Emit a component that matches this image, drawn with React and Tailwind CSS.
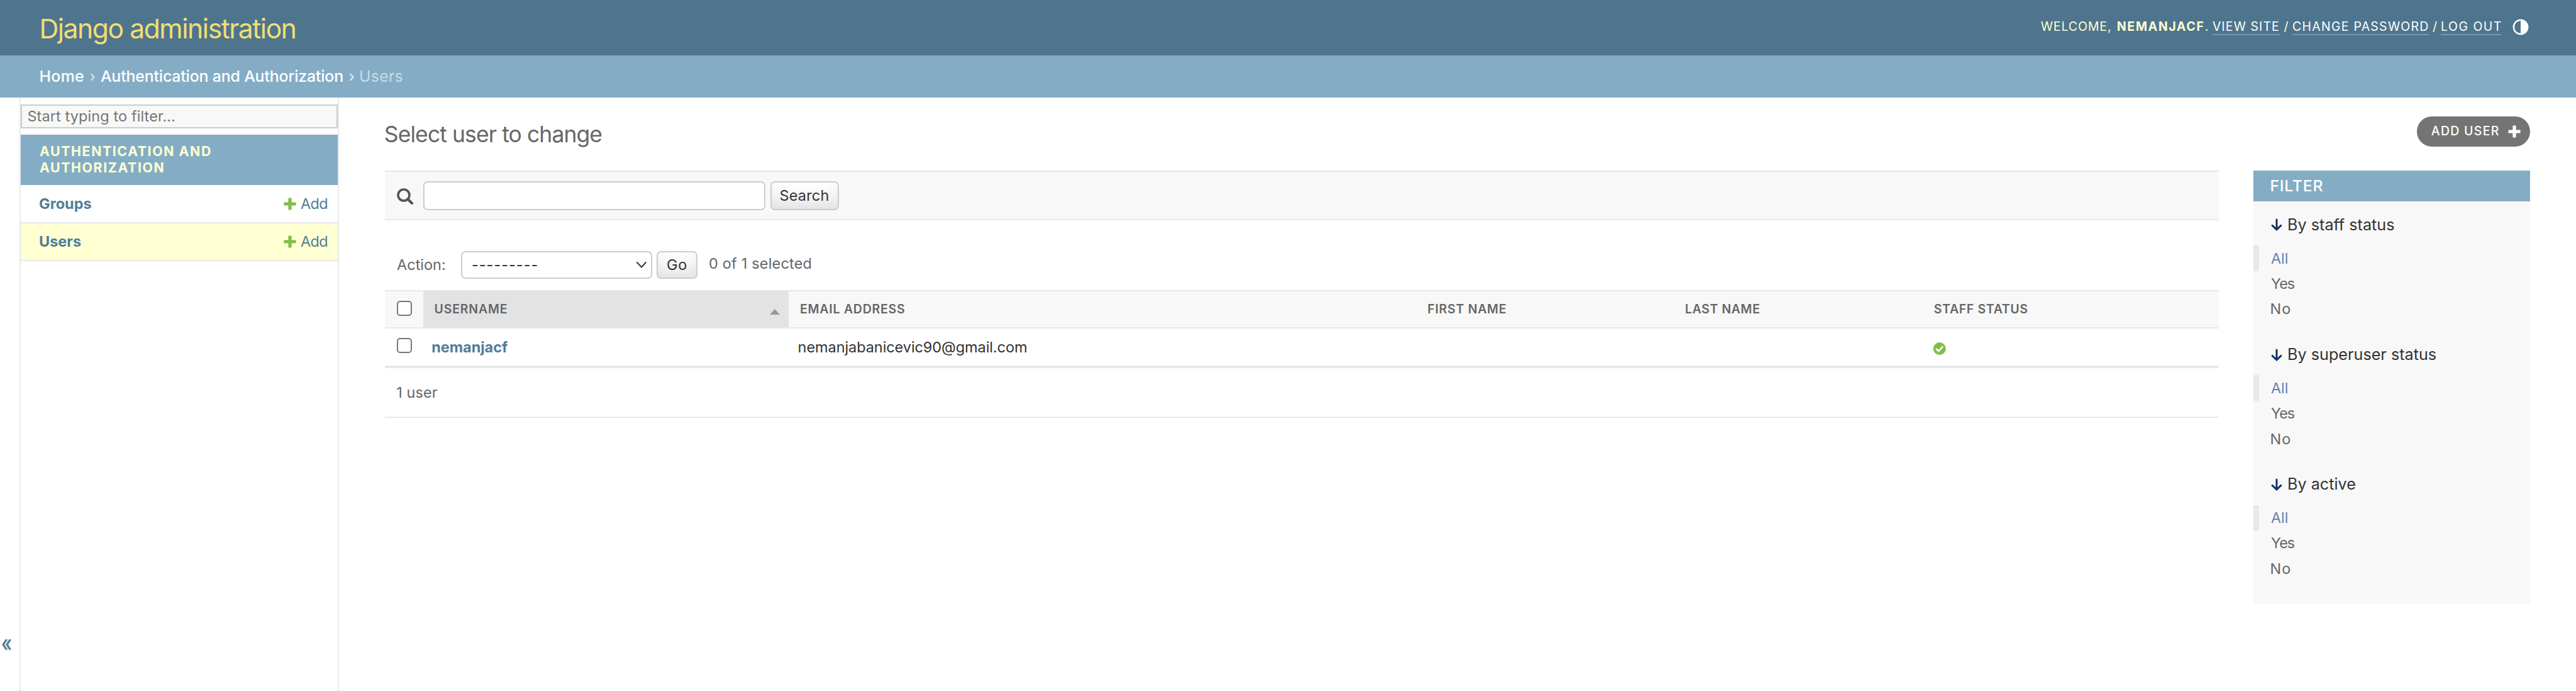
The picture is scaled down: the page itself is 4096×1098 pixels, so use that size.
function Plus({ className }) {
  return (
    <svg viewBox="0 0 20 20" className={className} fill="currentColor">
      <path d="M8.3 0.4h3.4a.9.9 0 0 1 .9.9v6.1h6.1a.9.9 0 0 1 .9.9v3.4a.9.9 0 0 1-.9.9h-6.1v6.1a.9.9 0 0 1-.9.9H8.3a.9.9 0 0 1-.9-.9v-6.1H1.3a.9.9 0 0 1-.9-.9V8.3a.9.9 0 0 1 .9-.9h6.1V1.3a.9.9 0 0 1 .9-.9z" />
    </svg>
  );
}

function Checkbox() {
  return (
    <div className="pl-[19px] pt-[15px]">
      <div className="h-[24px] w-[24px] rounded-[5px] border-2 border-[#767676] bg-white" />
    </div>
  );
}

function SideRow({ label, active }) {
  return (
    <div className={"flex items-center border-b-2 border-[#e8e8e8] pl-[29px] text-[23.5px] text-[#527d98] " + (active ? "h-[60px] bg-[#ffffd2]" : "h-[61px]")}>
      <span className="font-bold">{label}</span>
      <Plus className="ml-auto h-5 w-5 text-[#83bd47]" />
      <span className="ml-[7.5px] mr-[16px] tracking-[-0.7px]">Add</span>
    </div>
  );
}

function FilterGroup({ title }) {
  return (
    <div className="h-[206.2px] text-[23.5px] text-[#666]">
      <div className="flex h-[70.3px] items-center pl-[28px] pt-[4.5px] text-[25.2px] text-[#333]">
        <svg viewBox="0 0 18 20" className="mr-[8px] h-5 w-[18px]" fill="none" stroke="#123262" strokeWidth="3" strokeLinecap="round" strokeLinejoin="round">
          <path d="M9 2v15.5M2.2 11.4 9 18l6.8-6.6" />
        </svg>
        <span>{title}</span>
      </div>
      <div className="flex h-[40.3px] items-center border-l-[9px] border-[#e8e8e8] pl-[19px] text-[#6780ae]">
        <span className="tracking-[-0.1px]">All</span>
      </div>
      <div className="flex h-[40.3px] items-center pl-[28px]"><span className="tracking-[-1px]">Yes</span></div>
      <div className="flex h-[40.3px] items-center pl-[26.5px]"><span className="tracking-[1px]">No</span></div>
    </div>
  );
}

const cols = "grid grid-cols-[61px_581px_999px_409px_395px_471px]";
const button = "flex items-center justify-center rounded-[7px] border-2 border-[#ccc] bg-white text-[#333] shadow-[inset_0_-27px_37px_-18px_rgba(0,0,0,0.15)]";
const userLink = "h-[26px] border-b-2 border-white/25 whitespace-nowrap text-white";

export default function App() {
  return (
    <div className="flex h-[1098px] w-[4096px] flex-col overflow-hidden bg-white font-['Inter',sans-serif] text-[#333]">
      <header className="flex h-[88px] shrink-0 bg-[#4e758d] pl-[62.4px] pr-[75px]">
        <h1 className="pt-[1.5px] text-[42.7px] leading-[88px] tracking-[-1.48px] text-[#f1de72]">Django administration</h1>
        <div className="ml-auto flex pt-[30px] text-[19.5px] leading-[24px] text-[#ffffd2]">
          <span className="w-[121px] tracking-[0.89px]">WELCOME,</span>
          <span className="w-[140px] font-bold tracking-[1.63px]">NEMANJACF</span>
          <span className="w-[12px]">.</span>
          <a className={userLink + " w-[107px] tracking-[1.08px]"}>VIEW SITE</a>
          <span className="w-[20px] text-center">/</span>
          <a className={userLink + " w-[217px] tracking-[1.25px]"}>CHANGE PASSWORD</a>
          <span className="w-[19px] text-center">/</span>
          <a className={userLink + " w-[96px] tracking-[1.5px]"}>LOG OUT</a>
          <svg viewBox="0 0 26 26" className="ml-[18px] h-[26px] w-[26px]">
            <circle cx="13" cy="13" r="11.2" fill="none" stroke="#fff" strokeWidth="2.4" />
            <path d="M13 1a12 12 0 0 1 0 24z" fill="#fff" />
          </svg>
        </div>
      </header>
      <nav className="flex h-[67px] shrink-0 items-center whitespace-nowrap bg-[#84adc5] pl-[62.5px] text-[24.9px] text-white">
        <a className="w-[80px] font-medium tracking-[0.3px]">Home</a>
        <span className="w-[17.4px] text-[24px] text-[#d5e4ed]">›</span>
        <a className="w-[394.6px] font-medium tracking-[-0.18px]">Authentication and Authorization</a>
        <span className="w-[16.6px] text-[24px] text-[#e6eff4]">›</span>
        <span className="tracking-[0.22px] text-[#c6dbe7]">Users</span>
      </nav>
      <div className="flex min-h-0 flex-1">
        <div className="w-[33px] border-r-2 border-[#e8e8e8] pl-[2px] pt-[847px] text-[36px] font-semibold leading-[40px] text-[#527d98]">
          <span className="block w-[24px] origin-left scale-x-[0.75]">«</span>
        </div>
        <aside className="w-[506px] border-r-2 border-[#e8e8e8] pt-[11px]">
          <div className="flex h-[38px] items-center border-2 border-[#ccc] bg-[#f8f8f8] pl-[8.4px] text-[23.5px] tracking-[0.09px] text-[#757575]">Start typing to filter...</div>
          <div className="mt-[10px] flex h-[80px] flex-col justify-center bg-[#84adc5] pl-[30px] text-[21.3px] font-bold leading-[25.7px] tracking-[1.6px] text-[#ffffd2]">
            <span>AUTHENTICATION AND</span>
            <span>AUTHORIZATION</span>
          </div>
          <SideRow label="Groups" />
          <SideRow label="Users" active />
        </aside>
        <main className="flex-1 px-[73px]">
          <div className="flex h-[116px]">
            <h2 className="-ml-[1.2px] pt-[39px] text-[35.5px] leading-[40px] tracking-[-0.92px] text-[#666]">Select user to change</h2>
            <div className="ml-auto mt-[30px] flex h-[48px] w-[180px] items-center rounded-full bg-[#747474] pl-[22.8px] text-[19.5px] text-white">
              <span className="whitespace-nowrap font-medium tracking-[1.28px]">ADD USER</span>
              <Plus className="ml-auto mr-[15px] h-5 w-5" />
            </div>
          </div>
          <div className="flex">
            <div className="w-[2916px] text-[23.5px]">
              <div className="flex h-[79px] border-y-2 border-[#e8e8e8] bg-[#f8f8f8] pl-[19px] pt-[15px]">
                <svg viewBox="0 0 26 26" className="mt-[11px] h-[26px] w-[26px]" fill="none" stroke="#555">
                  <circle cx="11" cy="11" r="9" strokeWidth="3.6" />
                  <path d="M17.5 17.5 24 24" strokeWidth="4.2" strokeLinecap="round" />
                </svg>
                <div className="ml-4 h-[46px] w-[544px] rounded-[7px] border-2 border-[#ccc] bg-white" />
                <div className={button + " ml-[7.5px] h-[46px] w-[109px] tracking-[0.15px]"}>Search</div>
              </div>
              <div className="flex h-[111px] pl-[19px] pt-[49px] leading-[44px] text-[#666]">
                <div className="w-[102px]">Action:</div>
                <div className="flex h-[44px] w-[304px] items-center justify-between rounded-[7px] border-2 border-[#ccc] bg-white pl-[15px] pr-[6px] text-[#333]">
                  <span className="tracking-[1px]">---------</span>
                  <svg viewBox="0 0 18 12" className="h-[12px] w-[18px]" fill="none" stroke="#333" strokeWidth="2"><path d="M1.5 1.5 9 9.5l7.5-8" /></svg>
                </div>
                <div className={button + " ml-[7px] h-[44px] w-[65px] tracking-[0.7px]"}>Go</div>
                <div className="-mt-[2.5px] ml-[18px] tracking-[0.18px]">0 of 1 selected</div>
              </div>
              <div className={cols + " h-[61px] border-y-2 border-[#e8e8e8] bg-[#f8f8f8] text-[19.5px] font-semibold leading-[57px] text-[#666]"}>
                <Checkbox />
                <div className="flex items-center bg-[#e3e3e3] pl-[17.6px]">
                  <span className="tracking-[0.8px]">USERNAME</span>
                  <svg viewBox="0 0 16 9" className="ml-auto mr-[14px] mt-[8px] h-[9px] w-[16px]" fill="#999"><path d="M8 0l8 9H0z" /></svg>
                </div>
                <div className="pl-[18px] tracking-[0.76px]">EMAIL ADDRESS</div>
                <div className="pl-[16.8px] tracking-[0.72px]">FIRST NAME</div>
                <div className="pl-[17.3px] tracking-[0.58px]">LAST NAME</div>
                <div className="pl-[18px] tracking-[0.65px]">STAFF STATUS</div>
              </div>
              <div className={cols + " h-[63px] border-b-4 border-[#e8e8e8] leading-[60px]"}>
                <Checkbox />
                <div className="pl-[13.2px] font-bold tracking-[-0.06px] text-[#527d98]">nemanjacf</div>
                <div className="pl-[14.6px] tracking-[-0.08px]">nemanjabanicevic90@gmail.com</div>
                <div />
                <div />
                <div className="pl-[17px] pt-[22px]">
                  <svg viewBox="0 0 20 20" className="h-5 w-5">
                    <circle cx="10" cy="10" r="10" fill="#83bd47" />
                    <path d="M5 10.6 8.5 14l6.3-6.8" fill="none" stroke="#fff" strokeWidth="2.7" strokeLinecap="round" />
                  </svg>
                </div>
              </div>
              <div className="h-[79px] border-b-2 border-[#e8e8e8] pl-[18.2px] leading-[77px] tracking-[0.1px] text-[#666]">1 user</div>
            </div>
            <section className="ml-[55px] h-[689px] w-[440px] bg-[#f8f8f8]">
              <h2 className="h-[49px] bg-[#84adc5] pl-[26.5px] text-[24.9px] font-medium leading-[49px] tracking-[0.7px] text-white">FILTER</h2>
              <FilterGroup title="By staff status" />
              <FilterGroup title="By superuser status" />
              <FilterGroup title="By active" />
            </section>
          </div>
        </main>
      </div>
    </div>
  );
}
